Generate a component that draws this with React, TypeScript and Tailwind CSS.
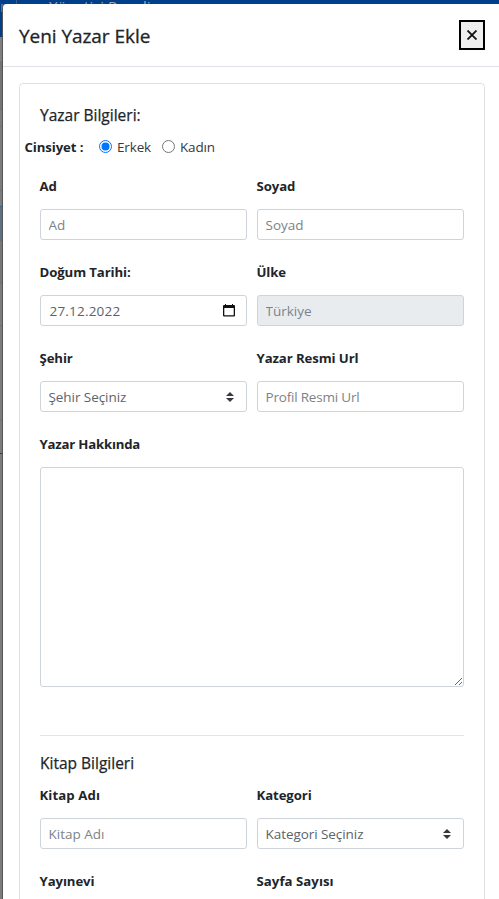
import React from "react";

const labelText = "-ml-[0.5px] block h-[21px] whitespace-nowrap text-[13.2px] font-bold leading-[20px] text-[#212529]";
const control =
  "block h-[31px] w-full rounded-[3px] border border-[#ced4da] bg-white pl-[7.5px] pr-2 text-[13.5px] leading-[21px] text-[#5b636a] placeholder:text-[#7b838a] placeholder:opacity-100 outline-none";
const sectionTitle =
  "h-6 whitespace-nowrap text-[15.5px] leading-[24px] tracking-[0px] text-[#212529] [-webkit-text-stroke:0.25px_#212529]";

function Field({ label, track = "tracking-[-0.1px]", children }: { label: string; track?: string; children?: React.ReactNode }) {
  return (
    <div className="min-w-0">
      <label className={`${labelText} ${track}`}>{label}</label>
      <div className="mt-3">{children}</div>
    </div>
  );
}

function Select({ text }: { text: string }) {
  return (
    <div className={`${control} flex items-center justify-between`}>
      <span className="whitespace-nowrap pt-[2px] tracking-[-0.06px]">{text}</span>
      <svg viewBox="0 0 4 5" className="mr-1 h-[10px] w-[8px]" fill="#343a40">
        <path d="M2 0L0 2h4zm0 5L0 3h4z" />
      </svg>
    </div>
  );
}

function Radio({ text, checked }: { text: string; checked?: boolean }) {
  return (
    <label className="flex items-center">
      <svg viewBox="0 0 13 13" className="mr-[5px] h-[13px] w-[13px] shrink-0" fill="none">
        <circle cx="6.5" cy="6.5" r="6" fill="#fff" stroke={checked ? "#0075ff" : "#767676"} />
        {checked && <circle cx="6.5" cy="6.5" r="4" fill="#0075ff" />}
      </svg>
      <span className="whitespace-nowrap pt-[2px] text-[13.5px] leading-[19px] tracking-[-0.15px] text-[#35393d]">{text}</span>
    </label>
  );
}

function Backdrop() {
  return (
    <div className="absolute inset-0 bg-[#7c7c7c]">
      <div className="h-[37px] overflow-hidden bg-[#00408a]">
        <div className="flex h-6 items-start">
          <div className="ml-[1px] mt-1 h-2 w-[2px] bg-[#49729c]" />
          <div className="ml-[13px] h-1 w-px bg-[#345c86]" />
          <div className="-mt-[2px] ml-[32px] whitespace-nowrap text-[15px] leading-[16px] text-[#a0a8b0]">Yönetici Paneli</div>
        </div>
      </div>
      <div className="h-[24px] bg-[#808080]" />
      <div className="h-[48px] bg-[#747474]" />
      <div className="h-[17px] border-t border-[#6f7173]" />
      <div className="h-[64px] border-t border-[#6f7173]" />
      <div className="h-[16px] border-t border-[#6f7173]" />
      <div className="h-[35px] border-t border-[#36659a] bg-[#5f7082]" />
      <div className="h-[42px] bg-[#777]" />
      <div className="h-[42px] border-t border-[#6f7173]" />
      <div className="h-[95px] border-t border-[#6f7173]" />
      <div className="h-[33px] border-t border-[#6f7173]" />
      <div className="h-[446px] border-t border-[#0c448a]" />
    </div>
  );
}

export default function App() {
  return (
    <div className="relative h-[899px] w-[499px] overflow-hidden font-['Open_Sans','Noto_Sans',sans-serif]">
      <Backdrop />
      <div className="relative ml-[2px] pt-1">
        <div className="h-[895px] overflow-hidden rounded-tl-[4px] border-l border-[#555] bg-white">
          <header className="flex h-[63px] items-center justify-between border-b border-[#dee2e6] pl-4 pr-[14px]">
            <h1 className="whitespace-nowrap pt-[2px] text-[19px] leading-[30px] tracking-[-0.05px] text-[#212529] [-webkit-text-stroke:0.3px_#212529]">
              Yeni Yazar Ekle
            </h1>
            <button className="flex h-[30px] w-[26px] items-center justify-center border-2 border-black bg-[#efefef]" aria-label="Kapat">
              <svg viewBox="0 0 10 10" className="h-[10px] w-[10px]" stroke="#111" strokeWidth="1.8">
                <path d="M.5 .5l9 9M9.5 .5l-9 9" />
              </svg>
            </button>
          </header>
          <main className="px-4 pr-[14px] pt-4">
            <section className="h-[900px] rounded-[4px] border border-[#dfe0e2] px-5 pt-[19px]">
              <h2 className={sectionTitle}>Yazar Bilgileri:</h2>
              <div className="-ml-[15px] mt-[9px] flex h-[21px] items-center">
                <span className={`${labelText} w-[74.5px] pt-px tracking-[-0.1px]`}>Cinsiyet :</span>
                <div className="w-[63px]">
                  <Radio text="Erkek" checked />
                </div>
                <Radio text="Kadın" />
              </div>
              <div className="mt-[19px] grid grid-cols-2 gap-x-[10px] gap-y-[22px]">
                <Field label="Ad">
                  <input className={control} placeholder="Ad" />
                </Field>
                <Field label="Soyad">
                  <input className={control} placeholder="Soyad" />
                </Field>
                <Field label="Doğum Tarihi:">
                  <div className={`${control} flex items-center justify-between`}>
                    <span className="pl-px pt-[2px] tracking-[0.2px]">27.12.2022</span>
                    <svg viewBox="0 0 12 13" className="mr-[3px] h-[13px] w-[12px]" fill="#111">
                      <path d="M2 0h1v1h6V0h1v1h1q1 0 1 1v9.500q0 1-1 1H1q-1 0-1-1V2q0-1 1-1h1zM1.300 4v7.300h9.400V4z" />
                    </svg>
                  </div>
                </Field>
                <Field label="Ülke">
                  <input className={`${control} !bg-[#e9ecef]`} placeholder="Türkiye" disabled />
                </Field>
                <Field label="Şehir">
                  <Select text="Şehir Seçiniz" />
                </Field>
                <Field label="Yazar Resmi Url">
                  <input className={`${control} tracking-[-0.2px]`} placeholder="Profil Resmi Url" />
                </Field>
                <div className="col-span-2">
                  <Field label="Yazar Hakkında" track="tracking-[-0.2px]">
                    <textarea className="block h-[220px] w-full resize rounded-[3px] border border-[#ced4da] bg-white outline-none" />
                  </Field>
                </div>
              </div>
              <hr className="mt-12 border-[#e3e4e5]" />
              <h2 className={`${sectionTitle} mt-[15px] tracking-[0.2px]`}>Kitap Bilgileri</h2>
              <div className="mt-[10px] grid grid-cols-2 gap-x-[10px] gap-y-[22px]">
                <Field label="Kitap Adı" track="tracking-[0.1px]">
                  <input className={control} placeholder="Kitap Adı" />
                </Field>
                <Field label="Kategori">
                  <Select text="Kategori Seçiniz" />
                </Field>
                <Field label="Yayınevi" />
                <Field label="Sayfa Sayısı" track="tracking-[0.05px]" />
              </div>
            </section>
          </main>
        </div>
      </div>
    </div>
  );
}
